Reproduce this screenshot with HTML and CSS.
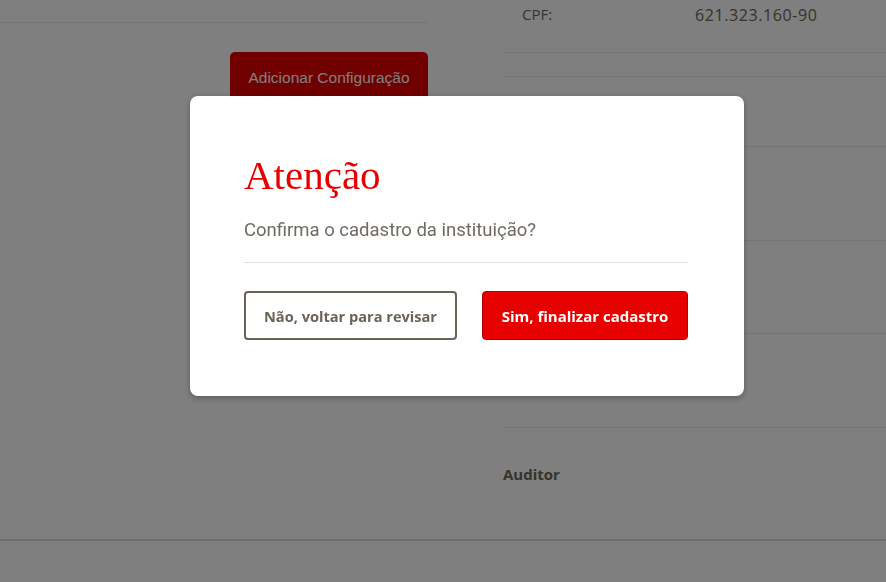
FILE: index.html
```html
<!DOCTYPE html>
<html lang="pt-BR">
<head>
<meta charset="utf-8">
<title>Cadastro da instituição</title>
<link rel="stylesheet" href="styles.css">
</head>
<body>
<div class="page">
  <div class="columns">
    <section class="col-left">
      <div class="left-header"></div>
      <div class="actions">
        <button class="btn-add">Adicionar Configuração</button>
      </div>
    </section>
    <section class="col-right">
      <div class="info-row first">
        <span class="info-label">CPF:</span>
        <span class="info-value">621.323.160-90</span>
      </div>
      <div class="info-row r24"></div>
      <div class="info-row r70"></div>
      <div class="info-row r94"></div>
      <div class="info-row r93"></div>
      <div class="info-row r94"></div>
      <div class="role">Auditor</div>
    </section>
  </div>
  <footer class="footer"></footer>
</div>

<div class="overlay"></div>
<div class="modal" role="dialog" aria-labelledby="modal-title">
  <h2 class="modal-title" id="modal-title">Atenção</h2>
  <p class="modal-text">Confirma o cadastro da instituição?</p>
  <hr class="modal-divider">
  <div class="modal-actions">
    <button class="btn btn-outline">Não, voltar para revisar</button>
    <button class="btn btn-primary">Sim, finalizar cadastro</button>
  </div>
</div>
</body>
</html>
```

FILE: styles.css
```css
html, body {
  margin: 0;
  padding: 0;
  height: 100%;
  overflow: hidden;
}
body {
  background: #ffffff;
  font-family: Roboto, "Liberation Sans", sans-serif;
  color: #6e665b;
}
.page {
  display: flex;
  flex-direction: column;
  height: 100%;
}
.columns {
  display: grid;
  grid-template-columns: 428px 1fr;
  column-gap: 75px;
  height: 539px;
}
.left-header {
  height: 22px;
  border-bottom: 1px solid #eae8e0;
}
.actions {
  display: flex;
  justify-content: flex-end;
  padding-top: 29px;
}
.btn-add {
  width: 198px;
  height: 52px;
  border: none;
  border-radius: 5px;
  background: #e00000;
  color: #ffffff;
  font-family: "Liberation Sans", Arial, sans-serif;
  font-size: 15.5px;
  padding: 0;
}
.info-row {
  border-bottom: 1px solid #eae8e0;
  box-sizing: border-box;
}
.info-row.first {
  height: 53px;
  display: flex;
  align-items: flex-start;
  padding: 4px 0 0 19px;
  font-family: "Open Sans", Roboto, sans-serif;
  font-size: 15px;
}
.info-label {
  width: 173px;
}
.info-value {
  font-size: 16px;
  letter-spacing: 0.6px;
}
.r24 { height: 24px; }
.r70 { height: 70px; }
.r94 { height: 94px; }
.r93 { height: 93px; }
.role {
  padding-top: 36px;
  font-family: "Open Sans", Roboto, sans-serif;
  font-size: 15px;
  font-weight: 700;
}
.footer {
  border-top: 2px solid #dcdcdc;
  flex: 1;
}
.overlay {
  position: fixed;
  inset: 0;
  background: rgba(0, 0, 0, 0.5);
}
.modal {
  position: fixed;
  top: 96px;
  left: 190px;
  width: 554px;
  height: 300px;
  box-sizing: border-box;
  padding: 56px 56px 0 54px;
  background: #ffffff;
  border-radius: 8px;
  box-shadow: 0 2px 6px rgba(0, 0, 0, 0.3);
}
.modal-title {
  margin: 0;
  font-family: "Liberation Serif", "Times New Roman", serif;
  font-weight: 400;
  font-size: 41px;
  line-height: 47px;
  color: #e60000;
}
.modal-text {
  margin: 19px 0 0;
  font-size: 18.5px;
  line-height: 24px;
  color: #6f6a62;
}
.modal-divider {
  margin: 20px 0 0;
  border: none;
  border-top: 1px solid #e3e3e3;
  height: 0;
}
.modal-actions {
  display: flex;
  justify-content: space-between;
  margin-top: 28px;
}
.btn {
  height: 49px;
  padding: 0;
  border-radius: 4px;
  font-family: "Open Sans", Roboto, sans-serif;
  font-size: 15px;
  font-weight: 700;
  box-sizing: border-box;
}
.btn-outline {
  width: 213px;
  background: #ffffff;
  border: 2px solid #6b6358;
  color: #6b6358;
  font-size: 14.6px;
}
.btn-primary {
  width: 206px;
  background: #e60000;
  border: 1px solid #b50000;
  color: #ffffff;
}
```
